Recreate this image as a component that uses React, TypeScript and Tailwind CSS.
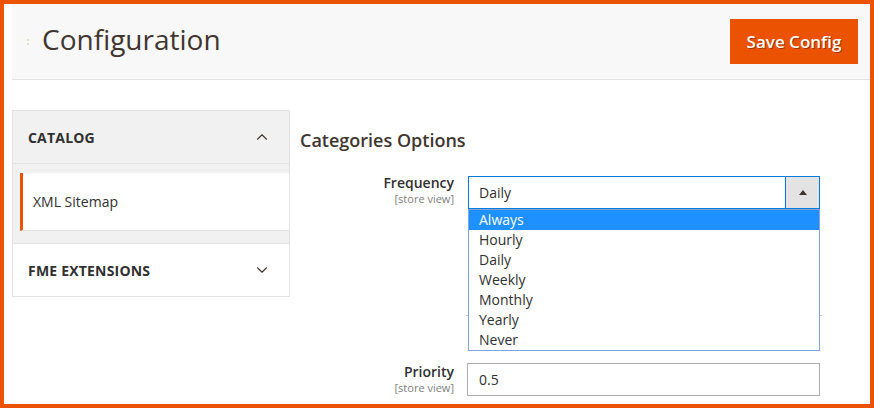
import { ChevronUp, ChevronDown } from 'lucide-react'

const options = ['Always', 'Hourly', 'Daily', 'Weekly', 'Monthly', 'Yearly', 'Never']

function NavSection({ title, open }: { title: string; open?: boolean }) {
  return (
    <div
      className={
        'flex h-[53px] items-center justify-between pl-[15px] pr-[18px] ' +
        (open ? 'bg-[#f1f1f1] border-b border-[#e3e3e3]' : 'bg-white border-t border-[#e3e3e3]')
      }
    >
      <span className="text-[14px] font-bold tracking-[0.2px] text-[#303030]">{title}</span>
      {open ? (
        <ChevronUp size={18} strokeWidth={1.5} className="text-[#41362f]" />
      ) : (
        <ChevronDown size={18} strokeWidth={1.5} className="text-[#41362f]" />
      )}
    </div>
  )
}

export default function App() {
  return (
    <div
      className="w-[874px] h-[408px] overflow-hidden border-4 border-[#eb5202] bg-white text-[#303030]"
      style={{ fontFamily: '"Open Sans", "Liberation Sans", sans-serif' }}
    >
      {/* page header */}
      <div className="ml-[8px] flex h-[76px] items-center justify-between border-b border-[#e3e3e3] bg-[#f8f8f8] pl-[15px] pr-[12px]">
        <div className="flex items-center">
          <span className="mr-[13px] flex flex-col gap-[2px]">
            <span className="h-[2px] w-[2px] bg-[#eadfcf]" />
            <span className="h-[2px] w-[2px] bg-[#eadfcf]" />
          </span>
          <h1 className="text-[28px] leading-none text-[#41362f] pb-[6px]">Configuration</h1>
        </div>
        <button className="h-[45px] w-[128px] bg-[#eb5202] text-[17px] font-semibold text-white [text-shadow:1px_1px_0_rgba(0,0,0,0.35)]">
          Save Config
        </button>
      </div>

      <div className="mt-[30px] flex items-start">
        {/* left nav */}
        <div className="ml-[8px] w-[278px] border border-[#e3e3e3] bg-[#f1f1f1]">
          <NavSection title="CATALOG" open />
          <div className="mt-[9px] mb-[12px] ml-[7px] flex h-[58px] items-center border-l-[3px] border-[#eb5202] bg-white pl-[10px] border-b border-b-[#e3e3e3]">
            <span className="text-[14px] text-[#303030]">XML Sitemap</span>
          </div>
          <NavSection title="FME EXTENSIONS" />
        </div>

        {/* main */}
        <div className="ml-[10px] flex-1">
          <h2 className="mt-[17px] text-[18px] font-semibold text-[#41362f]">Categories Options</h2>

          <div className="mt-[22px] flex">
            <div className="w-[154px] text-right -mt-[2px]">
              <div className="text-[14px] font-semibold leading-[18px] text-[#303030]">Frequency</div>
              <div className="text-[11px] leading-[13px] text-[#808080]">[store view]</div>
            </div>
            <div className="relative ml-[14px] w-[352px]">
              <div className="flex h-[33px] border border-[#007bdb] bg-white">
                <div className="flex flex-1 items-center pl-[10px] text-[14px] text-[#303030]">Daily</div>
                <div className="flex w-[34px] items-center justify-center border-l border-[#007bdb] bg-[#e3e3e3]">
                  <span className="h-0 w-0 border-x-[4px] border-b-[5px] border-x-transparent border-b-[#41362f]" />
                </div>
              </div>
              <div className="absolute left-0 top-[33px] z-10 w-[352px] border border-[#7fa3dc] bg-white">
                {options.map((o, i) => (
                  <div
                    key={o}
                    className={
                      'h-[20px] pl-[10px] text-[14px] leading-[20px] ' +
                      (i === 0 ? 'bg-[#1e90ff] text-white' : 'text-[#303030]')
                    }
                  >
                    {o}
                  </div>
                ))}
              </div>
              <div className="absolute left-[-2px] top-[139px] h-px w-[356px] bg-[#cccccc]" />
            </div>
          </div>

          <div className="mt-[154px] flex">
            <div className="w-[154px] text-right">
              <div className="text-[14px] font-semibold leading-[18px] text-[#303030]">Priority</div>
              <div className="text-[11px] leading-[13px] text-[#808080]">[store view]</div>
            </div>
            <div className="ml-[13px] flex h-[33px] w-[353px] items-center border border-[#adadad] pl-[11px] text-[14px] text-[#303030]">
              0.5
            </div>
          </div>
        </div>
      </div>
    </div>
  )
}
